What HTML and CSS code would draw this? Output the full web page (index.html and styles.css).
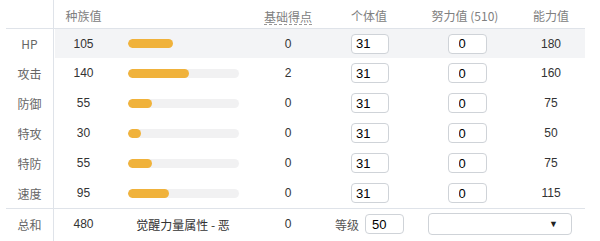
FILE: index.html
```html
<!DOCTYPE html>
<html lang="zh">
<head>
<meta charset="utf-8">
<link rel="stylesheet" href="styles.css">
</head>
<body>
<div class="stats">
  <div class="row head">
    <div class="c name"></div>
    <div class="c base">种族值</div>
    <div class="c bar"></div>
    <div class="c pts"><span class="dotted">基础得点</span></div>
    <div class="c iv">个体值</div>
    <div class="c ev">努力值 (510)</div>
    <div class="c val">能力值</div>
  </div>
  <div class="row first hl">
    <div class="c name">HP</div>
    <div class="c base">105</div>
    <div class="c bar"><div class="track"><div class="fill" style="width:45px"></div></div></div>
    <div class="c pts">0</div>
    <div class="c iv"><input class="inp" value="31"></div>
    <div class="c ev"><input class="inp evi" value="0"></div>
    <div class="c val">180</div>
  </div>
  <div class="row">
    <div class="c name">攻击</div>
    <div class="c base">140</div>
    <div class="c bar"><div class="track"><div class="fill" style="width:61px"></div></div></div>
    <div class="c pts">2</div>
    <div class="c iv"><input class="inp" value="31"></div>
    <div class="c ev"><input class="inp evi" value="0"></div>
    <div class="c val">160</div>
  </div>
  <div class="row">
    <div class="c name">防御</div>
    <div class="c base">55</div>
    <div class="c bar"><div class="track"><div class="fill" style="width:24px"></div></div></div>
    <div class="c pts">0</div>
    <div class="c iv"><input class="inp" value="31"></div>
    <div class="c ev"><input class="inp evi" value="0"></div>
    <div class="c val">75</div>
  </div>
  <div class="row">
    <div class="c name">特攻</div>
    <div class="c base">30</div>
    <div class="c bar"><div class="track"><div class="fill" style="width:13px"></div></div></div>
    <div class="c pts">0</div>
    <div class="c iv"><input class="inp" value="31"></div>
    <div class="c ev"><input class="inp evi" value="0"></div>
    <div class="c val">50</div>
  </div>
  <div class="row">
    <div class="c name">特防</div>
    <div class="c base">55</div>
    <div class="c bar"><div class="track"><div class="fill" style="width:24px"></div></div></div>
    <div class="c pts">0</div>
    <div class="c iv"><input class="inp" value="31"></div>
    <div class="c ev"><input class="inp evi" value="0"></div>
    <div class="c val">75</div>
  </div>
  <div class="row">
    <div class="c name">速度</div>
    <div class="c base">95</div>
    <div class="c bar"><div class="track"><div class="fill" style="width:41px"></div></div></div>
    <div class="c pts">0</div>
    <div class="c iv"><input class="inp" value="31"></div>
    <div class="c ev"><input class="inp evi" value="0"></div>
    <div class="c val">115</div>
  </div>
  <div class="row total">
    <div class="c name">总和</div>
    <div class="c base">480</div>
    <div class="c bar hp-type">觉醒力量属性 - 恶</div>
    <div class="c pts">0</div>
    <div class="c iv lvl"><span class="lbl">等级</span><input class="inp lvi" value="50"></div>
    <div class="c sel-cell"><div class="sel"><span class="arrow">▼</span></div></div>
  </div>
</div>
</body>
</html>
```

FILE: styles.css
```css
html, body {
  margin: 0;
  padding: 0;
  background: #fff;
}
body {
  font-family: "Liberation Sans", "Noto Sans CJK SC", sans-serif;
  font-size: 12px;
  color: #333;
}
.stats {
  width: 579px;
  margin-left: 6px;
  padding-top: 3px;
}
.row {
  display: grid;
  grid-template-columns: 48px 59px 137px 76px 86px 106px 67px;
  height: 30px;
  align-items: stretch;
}
.row.head {
  height: 25px;
  border-bottom: 1px solid #dfe3e9;
  color: #808080;
  font-family: "Noto Sans CJK SC", "Liberation Sans", sans-serif;
}
.row.first { height: 29px; }
.row.hl { background: linear-gradient(to right, transparent 49px, #f3f4f6 49px); }
.row.total {
  border-top: 1px solid #dfe3e9;
  height: 32px;
}
.c {
  display: flex;
  align-items: center;
  justify-content: center;
  white-space: nowrap;
}
.name {
  border-right: 1px solid #dfe3e9;
  color: #666;
  font-family: "Noto Sans CJK SC", "Liberation Sans", sans-serif;
}
.row.head .name { margin-top: -3px; }
.row.total .c { padding-bottom: 2px; }
.bar {
  justify-content: flex-start;
  padding-left: 15px;
}
.track {
  width: 111px;
  height: 9px;
  border-radius: 5px;
  background: #f1f1f2;
  overflow: hidden;
}
.row.hl .track { background: transparent; }
.fill {
  height: 9px;
  border-radius: 5px;
  background: #f0b23b;
}
.dotted {
  border-bottom: 1px dashed #999;
  line-height: 15px;
  padding-top: 2px;
}
.inp {
  box-sizing: border-box;
  width: 38px;
  height: 20px;
  border: 1px solid #cfd3d8;
  border-radius: 4px;
  padding: 0 0 0 4px;
  margin: 0;
  font-family: "Liberation Sans", sans-serif;
  font-size: 13px;
  font-weight: normal;
  color: #000;
  background: #fff;
  outline: none;
}
.iv .inp { margin-left: 2px; }
.evi { width: 39px; padding-left: 10px; margin-left: 4px; }
.val { padding-right: 1px; }
.hp-type {
  justify-content: center;
  padding-left: 3px;
  font-family: "Noto Sans CJK SC", sans-serif;
}
.lvl { gap: 4px; padding-left: 1px; }
.lbl { font-family: "Noto Sans CJK SC", sans-serif; color: #555; }
.lvi { width: 39px; height: 20px; padding-left: 6px; }
.sel-cell {
  grid-column: 6 / 8;
  justify-content: flex-start;
  padding-left: 16px;
}
.sel {
  box-sizing: border-box;
  width: 144px;
  height: 22px;
  border: 1px solid #cfd3d8;
  border-radius: 4px;
  background: #fff;
  display: flex;
  align-items: center;
  justify-content: flex-end;
  padding-right: 13px;
}
.arrow {
  font-size: 9px;
  color: #222;
}
```
